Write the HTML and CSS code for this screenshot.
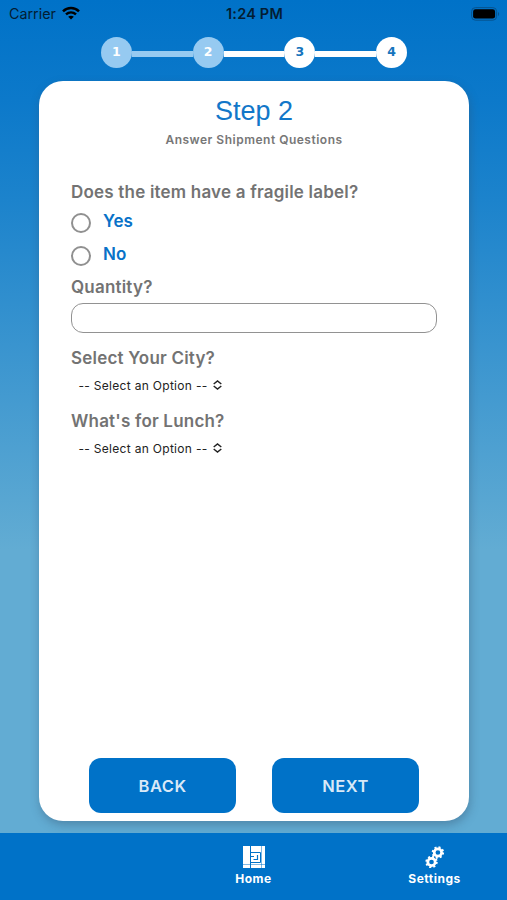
FILE: index.html
```html
<!DOCTYPE html>
<html lang="en">
<head>
<meta charset="utf-8">
<title>Step 2</title>
<link rel="stylesheet" href="styles.css">
</head>
<body>
<div class="app">
  <header class="status">
    <div class="carrier"><span class="carrier-name">Carrier</span>
      <svg class="wifi" width="18" height="14" viewBox="0 0 18 14" fill="none" stroke="#000" stroke-width="2.5"><path d="M1 5.3C5.5 .9 12.5 .9 17 5.3M4 8.4c3-2.7 7-2.7 10 0"/><path d="M9 13.5 6.2 10.7c1.6-1.4 4-1.4 5.6 0z" fill="#000" stroke="none"/></svg>
    </div>
    <div class="time">1:24 PM</div>
    <svg class="battery" width="29" height="14" viewBox="0 0 29 14"><rect x=".6" y=".6" width="25" height="12.6" rx="3.8" fill="none" stroke="#06538f" stroke-width="1"/><rect x="2.1" y="2.3" width="22" height="9.3" rx="2.4"/><path d="M27 5v4c1.5-.6 1.5-3.400 0-4z" fill="#06538f"/></svg>
  </header>
  <nav class="steps">
    <span class="step done">1</span><i class="line done"></i>
    <span class="step done">2</span><i class="line"></i>
    <span class="step">3</span><i class="line"></i>
    <span class="step">4</span>
  </nav>
  <main class="card">
    <h1 class="title">Step 2</h1>
    <p class="subtitle">Answer Shipment Questions</p>
    <form class="form">
      <h2 class="question q-fragile">Does the item have a fragile label?</h2>
      <div class="option"><span class="radio"></span><span class="option-text">Yes</span></div>
      <div class="option"><span class="radio"></span><span class="option-text">No</span></div>
      <h2 class="question q-quantity">Quantity?</h2>
      <div class="input"></div>
      <h2 class="question q-city">Select Your City?</h2>
      <div class="select"><span class="select-text">-- Select an Option --</span><svg width="9" height="10" viewBox="0 0 9 10" fill="none" stroke="#222" stroke-width="1.5"><path d="M.7 4 4.500 1l3.800 3M.7 6l3.800 3 3.800-3"/></svg></div>
      <h2 class="question q-lunch">What's for Lunch?</h2>
      <div class="select"><span class="select-text">-- Select an Option --</span><svg width="9" height="10" viewBox="0 0 9 10" fill="none" stroke="#222" stroke-width="1.5"><path d="M.7 4 4.500 1l3.800 3M.7 6l3.800 3 3.800-3"/></svg></div>
    </form>
    <div class="actions">
      <div class="button">BACK</div>
      <div class="button">NEXT</div>
    </div>
  </main>
  <footer class="tabs">
    <div class="tab"></div>
    <div class="tab">
      <svg width="22" height="22" viewBox="0 0 22 22"><path fill="#fff" d="M0 0h22v22H0z"/><g fill="none" stroke="#0072c8"><path d="M7.500 0v22M7.500 6.500H17.500V16.500H7.500" stroke-width="1"/><path d="M7.500 10.500H11M14.500 9v4.500H10.500" stroke-width="1.200"/><path d="M0 18.500h22M18.500 0v22" stroke-width=".5"/></g></svg>
      <span class="tab-label">Home</span>
    </div>
    <div class="tab">
      <svg width="20" height="22" viewBox="0 0 20 22" fill="none" stroke="#fff"><g stroke-width="2.700"><circle cx="12.900" cy="6.500" r="3.700"/><circle cx="6.500" cy="16" r="3.700"/></g><g stroke-width="2"><circle cx="12.900" cy="6.500" r="5.200" stroke-dasharray="2.040 2.040"/><circle cx="6.500" cy="16" r="5.200" stroke-dasharray="2.040 2.040"/></g></svg>
      <span class="tab-label">Settings</span>
    </div>
  </footer>
</div>
</body>
</html>
```

FILE: styles.css
```css
* { box-sizing: border-box; }
body { margin: 0; font-family: Inter, sans-serif; }
h1, h2, p { margin: 0; }
svg { display: block; flex: none; }
.app {
  width: 507px; height: 900px; overflow: hidden;
  display: flex; flex-direction: column;
  background: linear-gradient(#0072c8 0, #0c79ca 100px, #1c83cc 200px, #62acd3 550px);
}
.status {
  height: 37px; flex: none; padding: 0 7px 10px 9px;
  display: grid; grid-template-columns: 1fr auto 1fr; align-items: center;
}
.carrier { display: flex; align-items: center; gap: 6px; }
.carrier-name { font-size: 14.300px; color: #031d33; }
.wifi { margin-top: -2px; }
.time { font-size: 14.500px; font-weight: 600; letter-spacing: .2px; color: #031d33; }
.battery { justify-self: end; }
.steps { height: 31px; flex: none; display: flex; align-items: center; justify-content: center; padding-left: 1px; }
.step {
  width: 31px; height: 31px; border-radius: 50%; background: #fff; color: #1674bd;
  font: bold 12.500px/29px "DejaVu Sans", sans-serif; text-align: center;
}
.line { width: 60.700px; height: 6px; background: #fff; margin-top: 2px; }
.step.done { background: #96caf1; color: #fff; }
.line.done { background: #96caf1; }
.card {
  width: 430px; height: 740px; flex: none; margin: 12.500px 0 0 39px;
  border-radius: 24px; background: #fff; box-shadow: 1px 4px 10px rgba(50, 80, 110, .4);
  display: flex; flex-direction: column;
}
.title {
  margin-top: 13px; text-align: center; color: #1277c9;
  font: 400 27px/34px "Liberation Sans", sans-serif;
}
.subtitle { margin-top: 4px; text-align: center; font-size: 12px; line-height: 16px; font-weight: 600; letter-spacing: .5px; color: #777; }
.form { padding: 33px 32px 0; }
.question { font-size: 17px; line-height: 22px; font-weight: 600; letter-spacing: .2px; color: #737373; white-space: nowrap; }
.option { height: 33px; display: flex; align-items: center; gap: 12px; }
.q-fragile { margin-bottom: 4px; }
.radio { width: 20px; height: 20px; border: 2px solid #909090; border-radius: 50%; }
.option-text { font-size: 17px; line-height: 22px; font-weight: 600; color: #0872c8; margin-top: -4px; }
.q-quantity { margin-top: 3px; }
.input { height: 30px; margin-top: 5px; border: 1.500px solid #929292; border-radius: 12px; }
.q-city { margin-top: 14px; }
.select { height: 22px; margin-top: 5px; padding-left: 7.500px; display: flex; align-items: center; gap: 5.500px; }
.select-text { font-size: 12px; letter-spacing: .3px; color: #222; white-space: nowrap; padding-top: 1px; }
.q-lunch { margin-top: 14px; }
.actions { margin-top: auto; padding: 0 50px 8px; display: flex; justify-content: space-between; }
.button {
  width: 147px; height: 55px; padding-top: 2px; border-radius: 12px; background: #0072c8; color: #d9e9f7;
  display: flex; align-items: center; justify-content: center; font-size: 16.500px; font-weight: 600; letter-spacing: .5px;
}
.tabs {
  height: 67px; flex: none; margin-top: auto; background: #0072c8;
  display: grid; grid-template-columns: 163px 181px 181px;
}
.tab { display: flex; flex-direction: column; align-items: center; padding-top: 13px; }
.tab-label { margin-top: 3px; font-size: 12px; line-height: 16px; font-weight: 700; letter-spacing: .5px; color: #fff; }
```
